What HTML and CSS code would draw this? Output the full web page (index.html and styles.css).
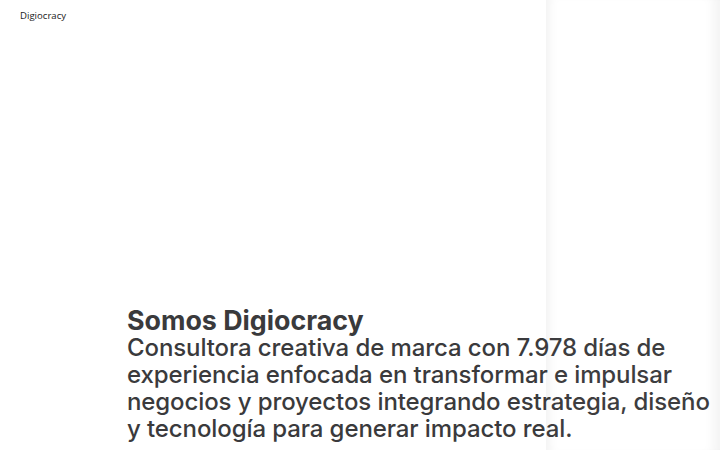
FILE: index.html
```html
<!DOCTYPE html>
<html lang="es">
<head>
<meta charset="utf-8">
<title>Digiocracy</title>
<link rel="stylesheet" href="styles.css">
</head>
<body>
<div class="page">
  <header class="top">
    <span class="brand">Digiocracy</span>
  </header>
  <main class="hero">
    <h1 class="title">Somos Digiocracy</h1>
    <p class="lead">Consultora creativa de marca con 7.978 días de experiencia enfocada en transformar e impulsar negocios y proyectos integrando estrategia, diseño y tecnología para generar impacto real.</p>
  </main>
  <div class="glass"></div>
</div>
</body>
</html>
```
FILE: styles.css
```css
* { box-sizing: border-box; }
html, body { margin: 0; padding: 0; background: #ffffff; }
body { font-family: Inter, "Liberation Sans", sans-serif; color: #3a3a3c; }
.page {
  position: relative;
  height: 450px;
  overflow: hidden;
  display: flex;
  flex-direction: column;
}
.top { padding: 3px 20px 0; }
.brand {
  font-family: "Open Sans", sans-serif;
  font-size: 9.6px;
  color: #222;
}
.hero {
  margin-top: auto;
  padding: 0 0 8px 127px;
  width: 720px;
}
.title {
  margin: 0;
  font-size: 26.8px;
  font-weight: 700;
  line-height: 28px;
}
.lead {
  margin: 0;
  font-size: 24px;
  font-weight: 500;
  line-height: 27px;
  letter-spacing: -0.1px;
}
.glass {
  position: absolute;
  top: 0;
  bottom: 0;
  left: 546px;
  right: 0;
  box-shadow: inset 10px 0 10px -6px rgba(0,0,0,0.05), inset -14px 0 12px -8px rgba(0,0,0,0.05);
  background: rgba(255,255,255,0.02);
}
```
